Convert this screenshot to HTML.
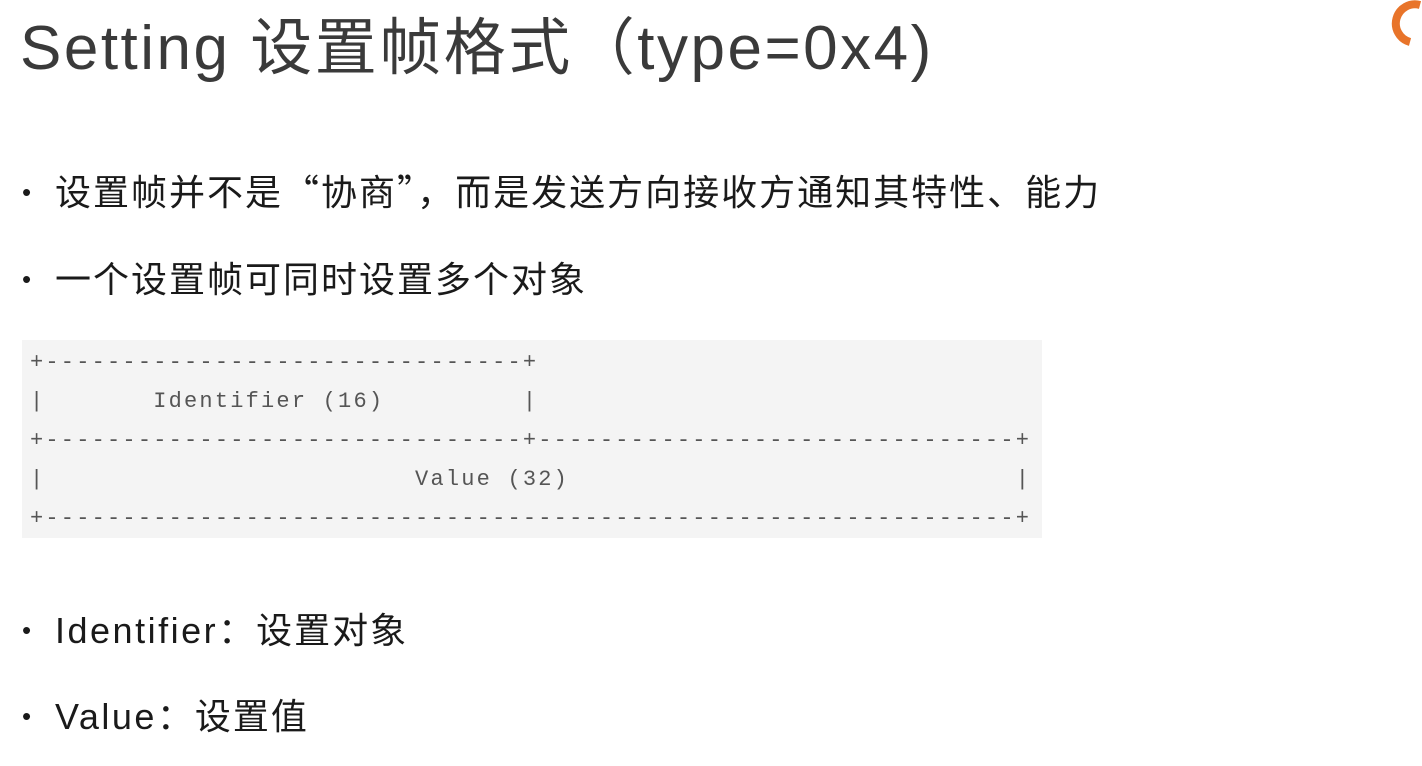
<!DOCTYPE html>
<html><head><meta charset="utf-8"><style>
body{margin:0;width:1422px;height:766px;background:#fff;overflow:hidden;position:relative;font-family:"Liberation Sans","Noto Sans CJK SC",sans-serif;color:#222}
.t{position:absolute;left:20px;top:-3px;font-size:62px;color:#3a3a3a;white-space:nowrap;letter-spacing:2.5px}
.b{position:absolute;left:22px;font-size:36px;white-space:nowrap;color:#1a1a1a;letter-spacing:2px}
.b span.d{display:inline-block;width:33px;font-size:26px;vertical-align:middle;position:relative;top:-3px}
.l{letter-spacing:2.5px}
.q{font-family:"Noto Sans CJK SC",sans-serif}
.code{position:absolute;left:22px;top:340px;width:1020px;height:198px;background:#f4f4f4}
pre{margin:0;position:absolute;left:30px;top:343px;font-family:"Liberation Mono",monospace;font-size:22px;letter-spacing:2.2px;line-height:39px;color:#555}
</style></head><body>
<div class="t">Setting 设置帧格式<span class="q">（</span>type=0x4)</div>
<svg style="position:absolute;left:1380px;top:0" width="42" height="50"><path d="M40 5 A16 16 0 1 0 30 42" stroke="#e8742a" stroke-width="8" fill="none"/></svg>
<div class="b" style="top:164px"><span class="d">•</span>设置帧并不是<span class="q">“</span>协商<span class="q">”</span>，而是发送方向接收方通知其特性、能力</div>
<div class="b" style="top:251px"><span class="d">•</span>一个设置帧可同时设置多个对象</div>
<div class="code"></div>
<pre>+-------------------------------+
|       Identifier (16)         |
+-------------------------------+-------------------------------+
|                        Value (32)                             |
+---------------------------------------------------------------+</pre>
<div class="b" style="top:602px"><span class="d">•</span><span class="l">Identifier</span>：设置对象</div>
<div class="b" style="top:688px"><span class="d">•</span><span class="l">Value</span>：设置值</div>
</body></html>
